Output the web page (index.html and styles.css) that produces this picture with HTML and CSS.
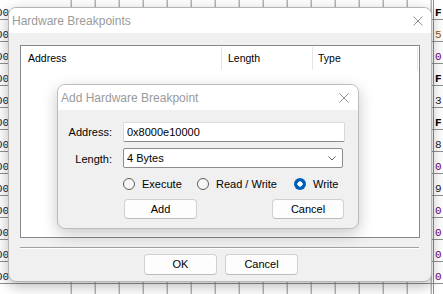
FILE: index.html
```html
<!DOCTYPE html>
<html>
<head>
<meta charset="utf-8">
<link rel="stylesheet" href="styles.css">
</head>
<body>
<div class="hex">
  <div class="col-left">
    <div class="cell">00</div><div class="cell">00</div><div class="cell">00</div><div class="cell">00</div>
    <div class="cell">00</div><div class="cell">00</div><div class="cell">00</div><div class="cell">00</div>
    <div class="cell">00</div><div class="cell">00</div><div class="cell">00</div><div class="cell">00</div>
    <div class="cell">00</div>
  </div>
  <div class="col-mid"></div>
  <div class="col-right">
    <div class="cell c-f">F</div>
    <div class="cell c-o">5:</div>
    <div class="cell c-p">0</div>
    <div class="cell c-f">F</div>
    <div class="cell c-d">3</div>
    <div class="cell c-f">F</div>
    <div class="cell c-d">8</div>
    <div class="cell c-p">0:</div>
    <div class="cell c-d">9</div>
    <div class="cell c-p">0</div>
    <div class="cell c-p">0</div>
    <div class="cell c-p">0</div>
    <div class="cell c-p">0</div>
  </div>
</div>

<div class="win main">
  <div class="titlebar">
    <span class="title">Hardware Breakpoints</span>
    <svg class="close" width="10" height="10" viewBox="0 0 10 10"><path d="M0.5 0.5L9.5 9.5M9.5 0.5L0.5 9.5" stroke="#8f8f8f" stroke-width="1" fill="none"/></svg>
  </div>
  <div class="main-body">
    <div class="list">
      <div class="list-head">
        <div class="hcell h-addr">Address</div>
        <div class="hcell h-len">Length</div>
        <div class="hcell h-type">Type</div>
      </div>
    </div>
    <div class="sep"></div>
    <div class="main-buttons">
      <div class="btn">OK</div>
      <div class="btn">Cancel</div>
    </div>
  </div>
</div>

<div class="win child">
  <div class="titlebar">
    <span class="title">Add Hardware Breakpoint</span>
    <svg class="close close-child" width="10" height="10" viewBox="0 0 10 10"><path d="M0.5 0.5L9.5 9.5M9.5 0.5L0.5 9.5" stroke="#8f8f8f" stroke-width="1" fill="none"/></svg>
  </div>
  <div class="child-body">
    <div class="label">Address:</div>
    <div class="input">0x8000e10000</div>
    <div class="label">Length:</div>
    <div class="combo"><span>4 Bytes</span>
      <svg width="8" height="5" viewBox="0 0 8 5"><path d="M0.5 0.5L4 4L7.5 0.5" stroke="#5f5f5f" stroke-width="1" fill="none"/></svg>
    </div>
    <div></div>
    <div class="radios">
      <div class="radio"><span class="dot"></span><span>Execute</span></div>
      <div class="radio"><span class="dot"></span><span>Read / Write</span></div>
      <div class="radio"><span class="dot on"></span><span>Write</span></div>
    </div>
    <div></div>
    <div class="child-buttons">
      <div class="btn">Add</div>
      <div class="btn">Cancel</div>
    </div>
  </div>
</div>
</body>
</html>
```
FILE: styles.css
```css
html, body {
  margin: 0;
  padding: 0;
}
body {
  width: 443px;
  height: 294px;
  overflow: hidden;
  background: #ffffff;
  position: relative;
  font-family: "Liberation Sans", Arial, sans-serif;
  font-size: 11px;
  color: #000;
}

/* background hex view */
.hex {
  display: grid;
  grid-template-columns: 70px 363px 10px;
  height: 294px;
  background-image: repeating-linear-gradient(to bottom,
    transparent 0, transparent 19px,
    #8f8f8f 19px, #8f8f8f 20px,
    transparent 20px, transparent 22px);
}
.col-left, .col-right {
  display: flex;
  flex-direction: column;
  padding-top: 2px;
  overflow: hidden;
  font-family: "Liberation Mono", "Courier New", monospace;
  font-size: 11px;
}
.col-left .cell {
  height: 22px;
  line-height: 22px;
  margin-left: -4px;
  color: #1c1c2c;
  white-space: nowrap;
}
.col-mid {
  background-image: linear-gradient(to right, #8f8f8f 1px, transparent 1px);
  background-size: 24px 100%;
  background-position: 0.7px 0;
}
.col-right {
  border-left: 1px solid #8f8f8f;
  box-sizing: border-box;
  background: transparent;
}
.col-right .cell {
  height: 22px;
  line-height: 22px;
  padding-left: 1px;
  white-space: nowrap;
}
.c-f { color: #000; font-weight: bold; }
.c-o { color: #9a5a00; }
.c-p { color: #6a006a; }
.c-d { color: #222; }

/* windows */
.win {
  position: absolute;
  box-sizing: border-box;
  border: 1px solid #b4b4b4;
  border-radius: 8px;
  background: #f0f0f0;
  overflow: hidden;
  display: flex;
  flex-direction: column;
}
.main {
  left: 8px;
  top: 7px;
  width: 424px;
  height: 275px;
  box-shadow: 0 4px 14px rgba(0, 0, 0, 0.28);
}
.child {
  left: 57px;
  top: 84px;
  width: 302px;
  height: 145px;
  border-color: #bcbcbc;
  box-shadow: 0 5px 16px rgba(0, 0, 0, 0.22);
}
.titlebar {
  height: 25px;
  flex: none;
  background: #ffffff;
  display: flex;
  align-items: center;
  justify-content: space-between;
  padding: 0 8px 0 3px;
}
.child .titlebar {
  padding-right: 9px;
}
.title {
  font-size: 12px;
  color: #9a9a9a;
}
.close {
  display: block;
}

/* main body */
.main-body {
  flex: 1;
  display: flex;
  flex-direction: column;
  padding: 12px 11px 0 11px;
}
.list {
  height: 193px;
  box-sizing: border-box;
  border: 1px solid #828790;
  background: #ffffff;
}
.list-head {
  display: flex;
  height: 24px;
}
.hcell {
  box-sizing: border-box;
  margin-top: 1px;
  height: 23px;
  line-height: 23px;
  border-right: 1px solid #e5e5e5;
  padding-left: 6px;
  font-size: 10.5px;
}
.h-addr { width: 201px; padding-left: 7px; }
.h-len { width: 91px; }
.h-type { width: 105px; padding-left: 5px; }

.sep {
  margin-top: 9px;
  height: 0;
  border-top: 1px solid #a0a0a0;
  border-bottom: 1px solid #ffffff;
  margin-right: 1px;
}
.main-buttons {
  margin-top: 5px;
  display: flex;
  justify-content: center;
  gap: 8px;
  padding-left: 2px;
}
.btn {
  box-sizing: border-box;
  width: 73px;
  height: 21px;
  line-height: 19px;
  text-align: center;
  background: #fdfdfd;
  border: 1px solid #d0d0d0;
  border-bottom-color: #bdbdbd;
  border-radius: 4px;
}

/* child body */
.child-body {
  display: grid;
  grid-template-columns: 54px 222px;
  grid-template-rows: 20px 20px 16px 20px;
  column-gap: 11px;
  row-gap: 7px;
  padding-top: 12px;
}
.label {
  text-align: right;
  line-height: 20px;
}
.input {
  box-sizing: border-box;
  height: 20px;
  line-height: 18px;
  background: #ffffff;
  border: 1px solid #d9d9d9;
  border-bottom-color: #8a8a8a;
  border-radius: 2px;
  padding-left: 3px;
}
.combo {
  box-sizing: border-box;
  height: 20px;
  margin-top: -1px;
  width: 220px;
  background: #ffffff;
  border: 1px solid #8c8c8c;
  border-radius: 2px;
  padding: 0 6px 0 3px;
  display: flex;
  align-items: center;
  justify-content: space-between;
}
.radios {
  display: grid;
  grid-template-columns: 74px 97px auto;
  align-items: center;
}
.radio {
  display: flex;
  align-items: center;
  gap: 7px;
}
.dot {
  box-sizing: border-box;
  width: 12px;
  height: 12px;
  border-radius: 50%;
  border: 1px solid #5c5c5c;
  background: #f6f6f6;
  flex: none;
}
.dot.on {
  border: none;
  background: radial-gradient(circle, #ffffff 0, #ffffff 2.4px, #005fb8 2.9px);
}
.child-buttons {
  display: flex;
  justify-content: space-between;
  padding: 0 1px;
}
.child-buttons .btn {
  width: 73px;
  height: 20px;
  line-height: 18px;
}
.child-buttons .btn + .btn {
  width: 72px;
}
```
